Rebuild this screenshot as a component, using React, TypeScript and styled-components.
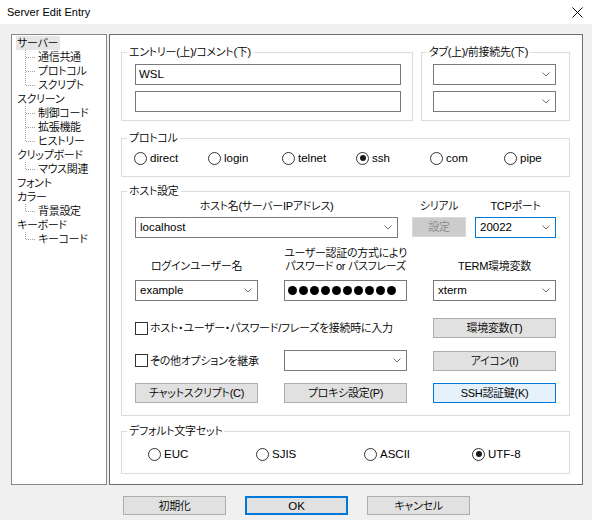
import React from 'react';
import styled, { createGlobalStyle, css } from 'styled-components';

const FONT = `"Liberation Sans", "Noto Sans CJK JP", sans-serif`;

const Global = createGlobalStyle`
  html, body { margin: 0; padding: 0; background: #f0f0f0; }
  body {
    font-family: ${FONT};
    font-size: 11px;
    letter-spacing: -0.3px;
    font-weight: 350;
    color: #000;
    font-feature-settings: "palt";
  }
  * { box-sizing: border-box; }
`;

const Latin = styled.span`
  font-size: 11.5px;
  letter-spacing: 0;
`;

const Window = styled.div`
  width: 592px;
  height: 520px;
  background: #f0f0f0;
  display: flex;
  flex-direction: column;
  overflow: hidden;
`;

const TitleBar = styled.div`
  height: 24px;
  background: #fff;
  display: flex;
  align-items: center;
  justify-content: space-between;
  padding: 0 9px 0 7px;
  font-family: "Liberation Sans", sans-serif;
  font-size: 11px;
  letter-spacing: 0;
`;

const Content = styled.div`
  display: flex;
  gap: 2px;
  padding: 10px 0 0 11px;
`;

const Tree = styled.div`
  width: 96px;
  height: 451px;
  background: #fff;
  border: 1px solid #828790;
  padding: 1px 0 0 4px;
  display: flex;
  flex-direction: column;
`;

const TreeRow = styled.div`
  height: 14px;
  line-height: 14px;
  display: flex;
  align-items: center;
  white-space: nowrap;
`;

const TreeLabel = styled.span<{ $selected?: boolean }>`
  padding: 0 2px 0 1px;
  line-height: 14px;
  ${(p) =>
    p.$selected &&
    css`
      background: #e5e5e5;
    `}
`;

const Panel = styled.div`
  width: 474px;
  height: 451px;
  background: #fff;
  border: 1px solid #6d6d6d;
  padding: 10px 12px 10px 11px;
  display: flex;
  flex-direction: column;
`;

const TopRow = styled.div`
  display: flex;
  gap: 8px;
`;

const Group = styled.fieldset<{ $mt?: number; $w?: number }>`
  margin: ${(p) => p.$mt ?? 0}px 0 0 0;
  padding: 0;
  border: 1px solid #dcdcdc;
  min-width: 0;
  ${(p) =>
    p.$w &&
    css`
      width: ${p.$w}px;
    `}
`;

const Legend = styled.legend`
  margin-left: 5px;
  padding: 0 2px;
  height: 14px;
  line-height: 14px;
`;

const Body = styled.div<{ $p: string }>`
  padding: ${(p) => p.$p};
`;

const Stack = styled(Body)`
  display: flex;
  flex-direction: column;
  gap: 6px;
`;

const TextBox = styled.div`
  height: 21px;
  border: 1px solid #7a7a7a;
  background: #fff;
  padding-left: 3px;
  line-height: 19px;
  white-space: nowrap;
  font-size: 11.5px;
  letter-spacing: 0;
`;

const ComboBox = styled.div<{ $focus?: boolean }>`
  height: 21px;
  border: 1px solid ${(p) => (p.$focus ? '#0078d7' : '#7a7a7a')};
  background: #fff;
  padding: 0 5px 0 4px;
  display: flex;
  align-items: center;
  justify-content: space-between;
  line-height: 19px;
  white-space: nowrap;
  font-size: 11.5px;
  letter-spacing: 0;
`;

const RadioRow = styled(Body)<{ $col: number; $n: number }>`
  display: grid;
  grid-template-columns: repeat(${(p) => p.$n}, ${(p) => p.$col}px);
`;

const Choice = styled.div`
  display: flex;
  align-items: center;
  gap: 3px;
  height: 14px;
  line-height: 14px;
  white-space: nowrap;
`;

const RadioCircle = styled.span<{ $checked?: boolean }>`
  width: 13px;
  height: 13px;
  border-radius: 50%;
  border: 1px solid #333;
  background: #fff;
  display: flex;
  align-items: center;
  justify-content: center;
  flex: none;
  &::after {
    content: '';
    width: 6px;
    height: 6px;
    border-radius: 50%;
    background: ${(p) => (p.$checked ? '#1a1a1a' : 'transparent')};
  }
`;

const CheckBox = styled.span`
  width: 13px;
  height: 13px;
  border: 1px solid #333;
  background: #fff;
  flex: none;
`;

const HostRow = styled.div`
  display: grid;
  grid-template-columns: 263px 1fr 81px;
`;

const Field = styled.div<{ $pad?: string }>`
  display: flex;
  flex-direction: column;
  gap: 4px;
  padding: ${(p) => p.$pad ?? '0'};
`;

const FieldLabel = styled.div`
  text-align: center;
  line-height: 14px;
  white-space: nowrap;
`;

const Grid3 = styled.div<{ $mt: number }>`
  display: grid;
  grid-template-columns: repeat(3, 123px);
  column-gap: 26px;
  align-items: center;
  margin-top: ${(p) => p.$mt}px;
`;

const LabeledCell = styled.div`
  display: flex;
  flex-direction: column;
  justify-content: flex-end;
  align-self: end;
`;

const MultiLabel = styled.div`
  text-align: center;
  line-height: 13px;
  margin-bottom: 7px;
  white-space: nowrap;
`;

const Password = styled.div`
  height: 21px;
  border: 1px solid #7a7a7a;
  background: #fff;
  padding-left: 3px;
  display: flex;
  align-items: center;
  gap: 2px;
`;

const Dot = styled.span`
  width: 9px;
  height: 9px;
  border-radius: 50%;
  background: #000;
`;

const Span2 = styled(Choice)`
  grid-column: 1 / 3;
  gap: 2px;
`;

const Check = styled(Choice)`
  gap: 2px;
`;

type Variant = 'normal' | 'disabled' | 'focus' | 'default';

const Button = styled.button<{ $v?: Variant; $w?: number; $h?: number }>`
  height: ${(p) => p.$h ?? 20}px;
  ${(p) =>
    p.$w &&
    css`
      width: ${p.$w}px;
    `}
  padding: 0;
  margin: 0;
  font: inherit;
  font-feature-settings: "palt";
  line-height: 14px;
  letter-spacing: inherit;
  color: #000;
  background: #e1e1e1;
  border: 1px solid #adadad;
  white-space: nowrap;
  ${(p) =>
    p.$v === 'disabled' &&
    css`
      background: #cccccc;
      border-color: #d9d9d9;
      color: #8a8a8a;
    `}
  ${(p) =>
    p.$v === 'focus' &&
    css`
      background: #e5f1fb;
      border-color: #0078d7;
    `}
  ${(p) =>
    p.$v === 'default' &&
    css`
      border: 2px solid #0078d7;
    `}
`;

const Footer = styled.div`
  display: flex;
  justify-content: center;
  gap: 19px;
  margin-top: 11px;
  padding-left: 1px;
`;

const Chevron = () => (
  <svg width="8" height="5" viewBox="0 0 8 5" style={{ flex: 'none' }}>
    <polyline points="0.5,0.5 4,4 7.5,0.5" fill="none" stroke="#707070" strokeWidth="1" />
  </svg>
);

const Combo: React.FC<{ value?: string; focus?: boolean }> = ({ value = '', focus }) => (
  <ComboBox $focus={focus}>
    <span>{value}</span>
    <Chevron />
  </ComboBox>
);

const Close = () => (
  <svg width="11" height="11" viewBox="0 0 11 11">
    <line x1="0.5" y1="0.5" x2="10.5" y2="10.5" stroke="#000" strokeWidth="1" />
    <line x1="10.5" y1="0.5" x2="0.5" y2="10.5" stroke="#000" strokeWidth="1" />
  </svg>
);

const Connector: React.FC<{ last: boolean }> = ({ last }) => (
  <svg width="21" height="14" viewBox="0 0 21 14" style={{ flex: 'none' }} shapeRendering="crispEdges">
    <line x1="9.5" y1="0" x2="9.5" y2={last ? 8 : 14} stroke="#a0a0a0" strokeDasharray="1 1" />
    <line x1="10" y1="7.5" x2="19" y2="7.5" stroke="#a0a0a0" strokeDasharray="1 1" />
  </svg>
);

const tree = [
  { label: 'サーバー', selected: true, children: ['通信共通', 'プロトコル', 'スクリプト'] },
  { label: 'スクリーン', children: ['制御コード', '拡張機能', 'ヒストリー'] },
  { label: 'クリップボード', children: ['マウス関連'] },
  { label: 'フォント', children: [] as string[] },
  { label: 'カラー', children: ['背景設定'] },
  { label: 'キーボード', children: ['キーコード'] },
];

const protocols = ['direct', 'login', 'telnet', 'ssh', 'com', 'pipe'];
const charsets = ['EUC', 'SJIS', 'ASCII', 'UTF-8'];

export default function App() {
  return (
    <>
      <Global />
      <Window>
        <TitleBar>
          <span>Server Edit Entry</span>
          <Close />
        </TitleBar>
        <Content>
          <Tree>
            {tree.map((node) => (
              <React.Fragment key={node.label}>
                <TreeRow>
                  <TreeLabel $selected={node.selected}>{node.label}</TreeLabel>
                </TreeRow>
                {node.children.map((c, i) => (
                  <TreeRow key={c}>
                    <Connector last={i === node.children.length - 1} />
                    <TreeLabel>{c}</TreeLabel>
                  </TreeRow>
                ))}
              </React.Fragment>
            ))}
          </Tree>
          <Panel>
            <TopRow>
              <Group $w={292}>
                <Legend>エントリー(上)/コメント(下)</Legend>
                <Stack $p="5px 11px 8px 13px">
                  <TextBox>WSL</TextBox>
                  <TextBox />
                </Stack>
              </Group>
              <Group $w={149}>
                <Legend>タブ(上)/前接続先(下)</Legend>
                <Stack $p="5px 13px 8px 11px">
                  <Combo />
                  <Combo />
                </Stack>
              </Group>
            </TopRow>

            <Group $mt={10}>
              <Legend>プロトコル</Legend>
              <RadioRow $p="6px 0 11px 12px" $col={74} $n={6}>
                {protocols.map((p) => (
                  <Choice key={p}>
                    <RadioCircle $checked={p === 'ssh'} />
                    <Latin>{p}</Latin>
                  </Choice>
                ))}
              </RadioRow>
            </Group>

            <Group $mt={7}>
              <Legend>ホスト設定</Legend>
              <Body $p="1px 13px 12px 13px">
                <HostRow>
                  <Field>
                    <FieldLabel>ホスト名(サーバーIPアドレス)</FieldLabel>
                    <Combo value="localhost" />
                  </Field>
                  <Field $pad="0 9px 0 14px">
                    <FieldLabel>シリアル</FieldLabel>
                    <Button $v="disabled">設定</Button>
                  </Field>
                  <Field>
                    <FieldLabel>TCPポート</FieldLabel>
                    <Combo value="20022" focus />
                  </Field>
                </HostRow>

                <Grid3 $mt={9}>
                  <LabeledCell>
                    <MultiLabel>ログインユーザー名</MultiLabel>
                    <Combo value="example" />
                  </LabeledCell>
                  <LabeledCell>
                    <MultiLabel>
                      ユーザー認証の方式により
                      <br />
                      パスワード or パスフレーズ
                    </MultiLabel>
                    <Password>
                      {Array.from({ length: 10 }).map((_, i) => (
                        <Dot key={i} />
                      ))}
                    </Password>
                  </LabeledCell>
                  <LabeledCell>
                    <MultiLabel>TERM環境変数</MultiLabel>
                    <Combo value="xterm" />
                  </LabeledCell>
                </Grid3>

                <Grid3 $mt={17}>
                  <Span2>
                    <CheckBox />
                    <span>ホスト・ユーザー・パスワード/フレーズを接続時に入力</span>
                  </Span2>
                  <Button>環境変数(T)</Button>
                </Grid3>

                <Grid3 $mt={12}>
                  <Check>
                    <CheckBox />
                    <span>その他オプションを継承</span>
                  </Check>
                  <Combo />
                  <Button>アイコン(I)</Button>
                </Grid3>

                <Grid3 $mt={12}>
                  <Button>チャットスクリプト(C)</Button>
                  <Button>プロキシ設定(P)</Button>
                  <Button $v="focus">SSH認証鍵(K)</Button>
                </Grid3>
              </Body>
            </Group>

            <Group $mt={8}>
              <Legend>デフォルト文字セット</Legend>
              <RadioRow $p="9px 0 12px 26px" $col={108} $n={4}>
                {charsets.map((c) => (
                  <Choice key={c}>
                    <RadioCircle $checked={c === 'UTF-8'} />
                    <Latin>{c}</Latin>
                  </Choice>
                ))}
              </RadioRow>
            </Group>
          </Panel>
        </Content>
        <Footer>
          <Button $w={103} $h={19}>初期化</Button>
          <Button $w={103} $h={19} $v="default">
            <Latin>OK</Latin>
          </Button>
          <Button $w={103} $h={19}>キャンセル</Button>
        </Footer>
      </Window>
    </>
  );
}
